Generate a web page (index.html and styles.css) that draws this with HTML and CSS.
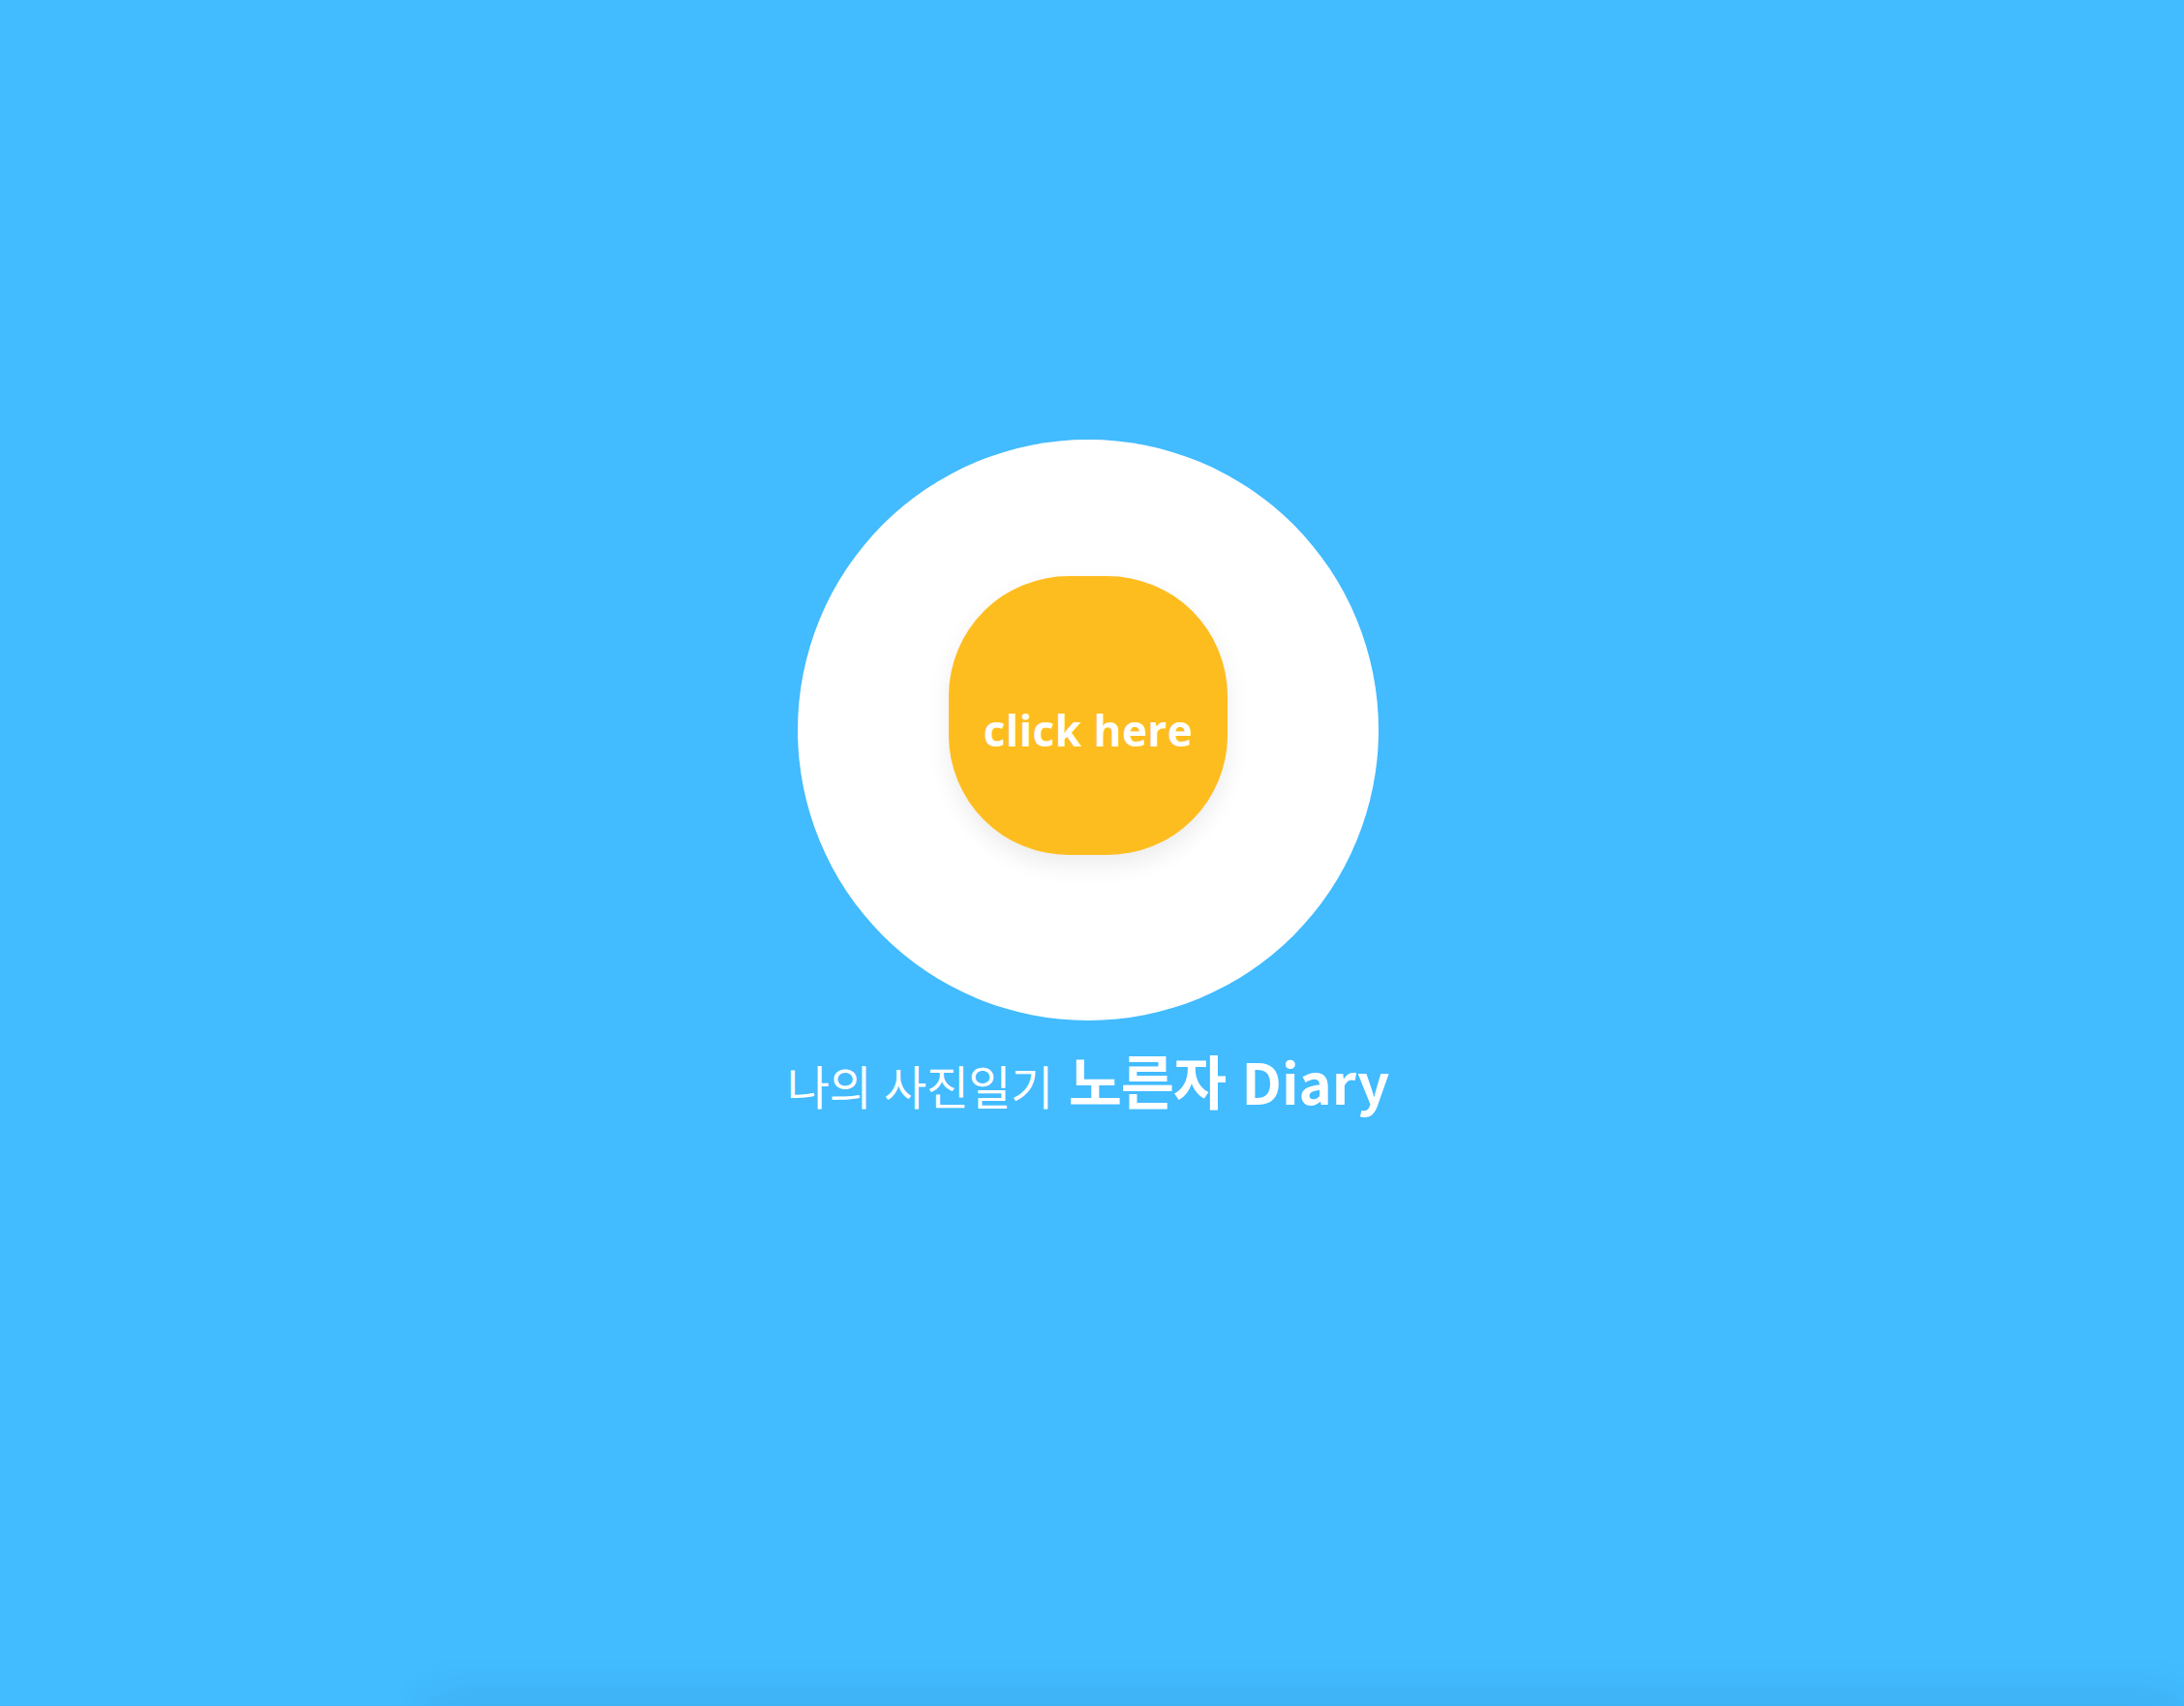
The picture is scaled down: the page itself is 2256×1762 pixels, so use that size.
FILE: index.html
```html
<!DOCTYPE html>
<html lang="ko">
<head>
<meta charset="utf-8">
<title>노른자 Diary</title>
<link rel="stylesheet" href="styles.css">
</head>
<body>
<main class="hero">
  <div class="egg-white">
    <button class="yolk" type="button">click here</button>
  </div>
  <h1 class="title"><span class="title-sub">나의 사진일기</span> <span class="title-main"><span class="title-ko">노른자</span> Diary</span></h1>
</main>
<section class="next"></section>
</body>
</html>
```

FILE: styles.css
```css
html, body {
  margin: 0;
  padding: 0;
}
body {
  background: #42bbff;
  font-family: "Noto Sans CJK KR", "Noto Sans", sans-serif;
  overflow: hidden;
}
.hero {
  height: 100vh;
  box-sizing: border-box;
  padding: 454px 8px 0 0;
  display: flex;
  flex-direction: column;
  align-items: center;
}
.egg-white {
  width: 600px;
  height: 600px;
  border-radius: 50%;
  background: #ffffff;
  display: flex;
  flex-direction: column;
  align-items: center;
  box-sizing: border-box;
  padding-top: 141px;
}
.yolk {
  width: 288px;
  height: 288px;
  border: none;
  border-radius: 43%;
  background: #febd1f;
  box-shadow: 0 10px 24px rgba(0, 0, 0, 0.08);
  color: #ffffff;
  font-family: "Open Sans", "Noto Sans", sans-serif;
  font-weight: 700;
  font-size: 44px;
  letter-spacing: 0.5px;
  padding: 30px 0 0 0;
  cursor: pointer;
}
.title {
  margin: 19px 0 0 0;
  color: #ffffff;
  line-height: 1.4;
  display: flex;
  align-items: baseline;
  gap: 16px;
  white-space: nowrap;
}
.title-sub {
  font-weight: 400;
  font-size: 48px;
  letter-spacing: -0.5px;
}
.title-main {
  font-weight: 700;
  font-size: 58px;
}
.title-ko {
  font-size: 60px;
  letter-spacing: -1px;
}
.next {
  height: 400px;
  margin-left: 440px;
  background: #42bbff;
  box-shadow: 0 -8px 50px rgba(0, 0, 0, 0.07);
}
```
